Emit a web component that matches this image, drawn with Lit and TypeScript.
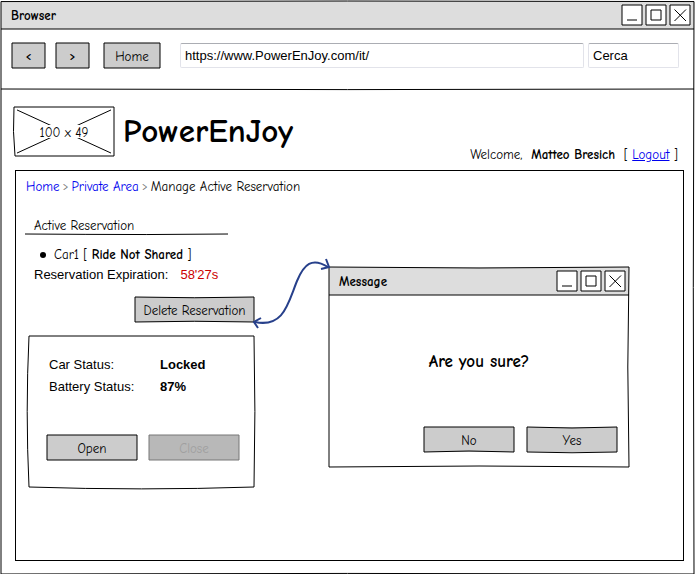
import { LitElement, html, svg, css } from "lit";
import { customElement, property } from "lit/decorators.js";

const sketch = css`
  * { box-sizing: border-box; }
  .frame {
    position: absolute;
    inset: 0;
    width: 100%;
    height: 100%;
    overflow: visible;
    pointer-events: none;
    fill: none;
    stroke: #000;
  }
  .frame path { vector-effect: non-scaling-stroke; }
`;

/* Hand-drawn outline, in percent of the box that it surrounds. */
const frame = (d: string) => html`
  <svg class="frame" viewBox="0 0 100 100" preserveAspectRatio="none" aria-hidden="true">
    ${svg`<path d=${d} />`}
  </svg>
`;

@customElement("sketch-button")
export class SketchButton extends LitElement {
  static styles = [
    sketch,
    css`
      :host { display: block; }
      button {
        position: relative;
        display: block;
        width: 100%;
        height: 25px;
        padding: 2px 0 0;
        border: 0;
        background: #ccc;
        color: #000;
        font: inherit;
        white-space: nowrap;
      }
      button:disabled { background: #b8b8b8; color: #a0a0a0; }
      button:disabled .frame { stroke: #777; }
    `,
  ];
  @property({ type: Boolean }) disabled = false;
  @property() outline = "M0 0H100V100H0Z";

  render() {
    return html`<button type="button" ?disabled=${this.disabled}>
      <slot></slot>${frame(this.outline)}
    </button>`;
  }
}

@customElement("sketch-window")
export class SketchWindow extends LitElement {
  static styles = [
    sketch,
    css`
      :host { display: flow-root; position: relative; background: #fff; }
      .bar {
        position: relative;
        display: flex;
        align-items: center;
        gap: 4px;
        height: 28px;
        padding: 0 4px 0 10px;
        background: #ddd;
      }
      .title {
        flex: 1;
        padding-top: 2px;
        font-size: 13px;
        font-weight: bold;
      }
      .control {
        display: block;
        width: 20px;
        height: 20px;
        padding: 0;
        border: 0;
        background: #fff;
      }
      .control svg {
        display: block;
        width: 20px;
        height: 20px;
        overflow: visible;
        fill: none;
        stroke: #000;
      }
    `,
  ];
  @property() heading = "";
  @property() outline = "M0 0H100V100H0Z";

  control(label: string, d: string) {
    return html`<button class="control" type="button" aria-label=${label}>
      <svg viewBox="0 0 20 20"><path d="M0 0H20V20H0Z" />${svg`<path d=${d} />`}</svg>
    </button>`;
  }

  render() {
    return html`
      <div class="bar">
        <span class="title">${this.heading}</span>
        ${this.control("Minimize", "M5 15H15")}
        ${this.control("Maximize", "M5 5H15V15H5Z")}
        ${this.control("Close", "M4.5 4.5L16 16M16 4.5L4.5 16")}
        ${frame("M0 100H100")}
      </div>
      <slot></slot>
      ${frame(this.outline)}
    `;
  }
}

@customElement("app-root")
export class AppRoot extends LitElement {
  static styles = [
    sketch,
    css`
      :host {
        display: block;
        padding: 1px 2px 0 1px;
        color: #000;
        background: #fff;
        font-family: "Comic Sans MS", "Comic Neue", "Open Sans", sans-serif;
        font-size: 13px;
        line-height: 20px;
      }
      a { color: #00e; text-decoration: none; }
      .toolbar {
        position: relative;
        display: flex;
        height: 60px;
        padding: 14px 15px 0 11px;
      }
      .nav { width: 33px; margin-right: 11px; font-size: 11px; font-weight: bold; }
      .home { width: 56px; margin: 0 20px 0 4px; }
      .field {
        height: 25px;
        min-width: 0;
        padding: 0 4px;
        border: 1px solid #e2e3ea;
        border-top-color: #abadb3;
        border-radius: 2px;
        background: #fff;
        color: #000;
        font: 13px "Liberation Sans", Arial, sans-serif;
      }
      .url { flex: 1; margin-right: 4px; }
      .search { width: 91px; }
      .header {
        display: flex;
        height: 81px;
        padding: 18px 16px 0 13px;
      }
      .logo {
        position: relative;
        display: grid;
        place-items: center;
        width: 100px;
        height: 49px;
      }
      .logo-text {
        position: relative;
        padding-top: 2px;
        background: #fff;
        line-height: 11px;
      }
      .brand {
        flex: 1;
        margin: 0 0 0 9px;
        font-size: 33px;
        line-height: 48px;
      }
      .user { align-self: flex-end; padding-bottom: 5px; white-space: pre; }
      .logout { text-decoration: underline; }
      .panel {
        min-height: 391px;
        margin: 0 10px 13px 14px;
        padding: 6px 9px;
        border: 1px solid #000;
      }
      .crumbs { display: flex; gap: 3px; margin-bottom: 19px; padding-left: 1px; }
      .sep { color: #777; font-size: 11px; }
      .columns {
        display: grid;
        grid-template-columns: 229px 75px minmax(0, 300px);
        align-items: start;
      }
      .section {
        position: relative;
        width: 203px;
        margin: 0 0 11px;
        padding: 1px 0 0 9px;
        font-size: 13px;
        font-weight: normal;
        line-height: 17px;
      }
      .rides { margin: 0; padding: 0 0 0 15px; list-style: none; }
      .ride { display: flex; align-items: center; gap: 8px; }
      .ride::before {
        content: "";
        width: 6px;
        height: 6px;
        border-radius: 50%;
        background: #000;
      }
      .plain { font-family: "Liberation Sans", Arial, sans-serif; font-size: 13px; }
      .expiry { display: flex; gap: 12px; margin: 0 0 12px; padding-left: 9px; }
      .time { color: #c00; }
      .delete { width: 119px; margin-left: auto; }
      .card {
        position: relative;
        margin: 14px 0 0 4px;
        padding: 18px 15px 27px 18px;
      }
      .status {
        display: grid;
        grid-template-columns: 111px 1fr;
        margin: 0 0 37px;
        padding-left: 2px;
        line-height: 22px;
      }
      .value { margin: 0; font-weight: bold; }
      .actions { display: grid; grid-template-columns: 1fr 1fr; gap: 12px; }
      .link {
        width: 75px;
        height: 72px;
        margin-top: 42px;
        overflow: visible;
        fill: none;
        stroke: #27408b;
        stroke-width: 2;
        z-index: 1;
      }
      .dialog { margin-top: 51px; }
      .question {
        margin: 0;
        padding: 56px 0 54px;
        font-size: 17px;
        font-weight: bold;
        line-height: 22px;
        text-align: center;
      }
      .answers {
        display: grid;
        grid-template-columns: 90px 90px;
        justify-content: end;
        gap: 13px;
        padding: 0 12px 15px;
      }
    `,
  ];

  render() {
    return html`
      <sketch-window heading="Browser" outline="M0 .1L50 0L100 .1L99.9 50L100 100L50 99.9L0 100Z">
        <div class="toolbar">
          <sketch-button class="nav">&lt;</sketch-button>
          <sketch-button class="nav">&gt;</sketch-button>
          <sketch-button class="home">Home</sketch-button>
          <input class="field url" aria-label="Address" value="https://www.PowerEnJoy.com/it/" />
          <input class="field search" aria-label="Search" value="Cerca" />
          ${frame("M0 100L50 101L100 100")}
        </div>
        <header class="header">
          <div class="logo">
            ${frame("M0 0H100V100H1L-.5 50ZM3 6L97 94M97 6L3 94")}
            <span class="logo-text">100 x 49</span>
          </div>
          <h1 class="brand">PowerEnJoy</h1>
          <div class="user">Welcome,  <b>Matteo Bresich</b>  [ <a class="logout" href="#logout">Logout</a> ]</div>
        </header>
        <main class="panel">
          <nav class="crumbs" aria-label="Breadcrumb">
            <a href="#home">Home</a><span class="sep">&gt;</span>
            <a href="#private">Private Area</a><span class="sep">&gt;</span>
            <span>Manage Active Reservation</span>
          </nav>
          <div class="columns">
            <section>
              <h2 class="section">Active Reservation${frame("M0 100L30 102L60 103L100 100")}</h2>
              <ul class="rides">
                <li class="ride"><span>Car1 [ <b>Ride Not Shared</b> ]</span></li>
              </ul>
              <p class="expiry plain">
                <span>Reservation Expiration:</span><span class="time">58'27s</span>
              </p>
              <sketch-button class="delete" outline="M0 0L50 3L100 0V100L50 97L0 100Z">Delete Reservation</sketch-button>
              <div class="card">
                ${frame("M0 0H100Q100.8 50 100 100Q50 102.5 0 100Q-1.6 50 0 0Z")}
                <dl class="status plain">
                  <dt>Car Status:</dt><dd class="value">Locked</dd>
                  <dt>Battery Status:</dt><dd class="value">87%</dd>
                </dl>
                <div class="actions">
                  <sketch-button>Open</sketch-button>
                  <sketch-button disabled>Close</sketch-button>
                </div>
              </div>
            </section>
            <svg class="link" viewBox="254 258 75 72" aria-hidden="true">
              <path d="M255 322C284 328 288 303 297 281C304 264 312 257 328 267" />
              <path d="M261 318L254 322L258 328M326 259L329 267L321 269" />
            </svg>
            <sketch-window class="dialog" role="dialog" aria-label="Message" heading="Message"
              outline="M0 0L50 .5L100 0L99.6 50L100 100L50 99.5L0 100Z">
              <p class="question">Are you sure?</p>
              <div class="answers">
                <sketch-button outline="M0 0H100V100L50 96L0 100Z">No</sketch-button>
                <sketch-button outline="M0 0L50 4L100 0V100L50 103L0 100Z">Yes</sketch-button>
              </div>
            </sketch-window>
          </div>
        </main>
      </sketch-window>
    `;
  }
}
